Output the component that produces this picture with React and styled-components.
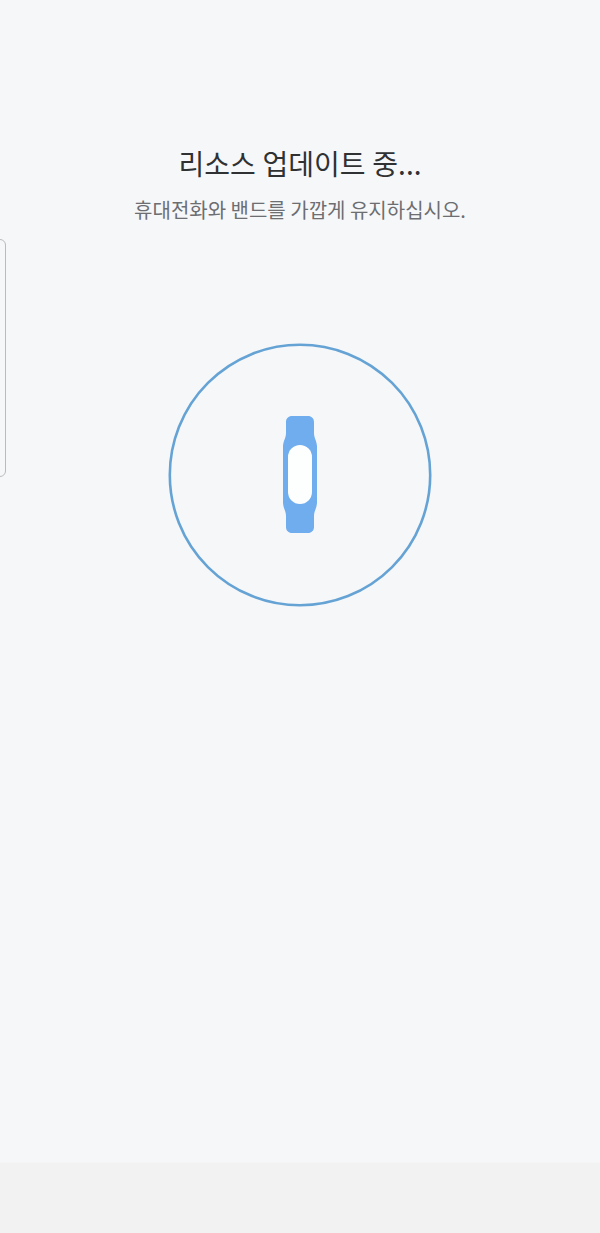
import React from "react";
import styled, { createGlobalStyle } from "styled-components";

const Global = createGlobalStyle`
  html, body { margin: 0; padding: 0; background: #f6f7f9; }
  * { box-sizing: border-box; }
`;

const Screen = styled.div`
  position: relative;
  width: 600px;
  height: 1233px;
  overflow: hidden;
  display: flex;
  flex-direction: column;
  background: #f6f7f9;
  font-family: "Noto Sans CJK KR", "Noto Sans", sans-serif;
`;

const Main = styled.main`
  flex: 1;
  display: flex;
  flex-direction: column;
  align-items: center;
  padding-top: 143px;
`;

const Title = styled.h1`
  margin: 0;
  font-size: 28px;
  line-height: 40px;
  font-weight: 400;
  word-spacing: 0.5px;
  color: #303133;
  white-space: nowrap;
`;

const Subtitle = styled.p`
  margin: 13px 0 0;
  font-size: 20px;
  line-height: 28px;
  font-weight: 400;
  color: #6c6e71;
  white-space: nowrap;
`;

const Illustration = styled.svg`
  display: block;
  width: 264px;
  height: 264px;
  margin-top: 119px;
`;

const EdgeHandle = styled.div`
  position: absolute;
  left: -8px;
  top: 239px;
  width: 14px;
  height: 238px;
  border: 1px solid #b9bcbe;
  border-radius: 6px;
`;

const NavBar = styled.footer`
  height: 70px;
  background: #f2f2f2;
  box-shadow: 0 -1px 0 #f5f5f5;
`;

const BandIllustration = () => (
  <Illustration viewBox="0 0 264 264">
    <circle cx="132" cy="132" r="130.2" fill="none" stroke="#66a3d5" strokeWidth="2.6" />
    <g transform="translate(115 73)">
      <path
        fill="#6fadee"
        d="M9 0H25C28.500 0 31 2.500 31 6V17C31 22 33.500 24 34 30V87C33.500 93 31 95 31 100V111C31 114.500 28.500 117 25 117H9C5.500 117 3 114.500 3 111V100C3 95 0.500 93 0 87V30C0.500 24 3 22 3 17V6C3 2.500 5.500 0 9 0Z"
      />
      <rect x="5" y="29" width="24" height="59" rx="12" fill="#fdfefe" />
    </g>
  </Illustration>
);

export default function App() {
  return (
    <Screen>
      <Global />
      <Main>
        <Title>리소스 업데이트 중...</Title>
        <Subtitle>휴대전화와 밴드를 가깝게 유지하십시오.</Subtitle>
        <BandIllustration />
      </Main>
      <EdgeHandle />
      <NavBar />
    </Screen>
  );
}
